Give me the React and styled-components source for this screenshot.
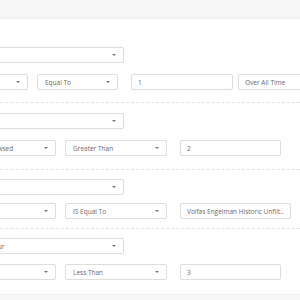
import React from "react";
import styled, { createGlobalStyle } from "styled-components";

const Global = createGlobalStyle`
  html, body { margin: 0; padding: 0; background: #ffffff; overflow: hidden; }
  body { font-family: "Open Sans", "Liberation Sans", sans-serif; }
`;

const Page = styled.div`
  width: 300px;
  height: 300px;
  overflow: hidden;
  display: flex;
  flex-direction: column;
  background: #fff;
`;

const Band = styled.div`
  height: ${(p) => p.$h}px;
  flex: none;
  background: #f6f6f6;
  border-${(p) => (p.$bottom ? "top" : "bottom")}: 1px solid #eeeeee;
`;

const Shift = styled.div`
  margin-left: -100px;
  display: flex;
  flex-direction: column;
`;

const Group = styled.div`
  display: flex;
  flex-direction: column;
  gap: ${(p) => p.$gap}px;
  padding-top: ${(p) => p.$top}px;
  padding-bottom: ${(p) => p.$bottom}px;
  border-bottom: ${(p) => (p.$divider ? "1px dashed #e4e4e4" : "none")};
`;

const Row = styled.div`
  display: flex;
  align-items: center;
`;

const Box = styled.div`
  box-sizing: border-box;
  flex: none;
  width: ${(p) => p.$w}px;
  height: 16px;
  margin-left: ${(p) => p.$ml || 0}px;
  border: 1px solid #dedede;
  border-radius: 2px;
  background: #fff;
  box-shadow: 0 0 1px rgba(0, 0, 0, 0.04);
  display: flex;
  align-items: center;
  padding: 0 6px 0 ${(p) => p.$pl || 6}px;
  font-size: 6.5px;
  color: #6a6a6a;
  white-space: nowrap;
  overflow: hidden;
`;

const Label = styled.span`
  flex: 1;
  overflow: hidden;
  text-overflow: clip;
`;

const Caret = styled.span`
  flex: none;
  width: 0;
  height: 0;
  margin-left: 4px;
  margin-right: 1px;
  border-left: 2px solid transparent;
  border-right: 2px solid transparent;
  border-top: 2px solid #777;
`;

function Select({ w, ml, children, pl }) {
  return (
    <Box $w={w} $ml={ml} $pl={pl}>
      <Label>{children}</Label>
      <Caret />
    </Box>
  );
}

function Input({ w, ml, children }) {
  return (
    <Box $w={w} $ml={ml}>
      <Label>{children}</Label>
    </Box>
  );
}

export default function App() {
  return (
    <>
      <Global />
      <Page>
        <Band $h={18} />
        <Shift>
          <Group $top={28} $gap={11} $bottom={12} $divider>
            <Select w={224} />
            <Row>
              <Select w={128} />
              <Select w={81} ml={9} pl={7}>Equal To</Select>
              <Input w={102} ml={13}>1</Input>
              <Input w={80} ml={5}>Over All Time</Input>
            </Row>
          </Group>
          <Group $top={10} $gap={11} $bottom={13} $divider>
            <Select w={224} />
            <Row>
              <Select w={156} pl={66}>Times Browsed</Select>
              <Select w={102} ml={9} pl={7}>Greater Than</Select>
              <Input w={101} ml={13}>2</Input>
            </Row>
          </Group>
          <Group $top={9} $gap={8} $bottom={9} $divider>
            <Select w={224} />
            <Row>
              <Select w={156} />
              <Select w={102} ml={9} pl={7}>IS Equal To</Select>
              <Input w={111} ml={13}>Volfas Engelman Historic Unfilt...</Input>
            </Row>
          </Group>
          <Group $top={9} $gap={10} $bottom={14}>
            <Select w={224} pl={88}>Hour</Select>
            <Row>
              <Select w={156} />
              <Select w={102} ml={9} pl={7}>Less Than</Select>
              <Input w={101} ml={13}>3</Input>
            </Row>
          </Group>
        </Shift>
        <Band $h={10} $bottom />
      </Page>
    </>
  );
}
